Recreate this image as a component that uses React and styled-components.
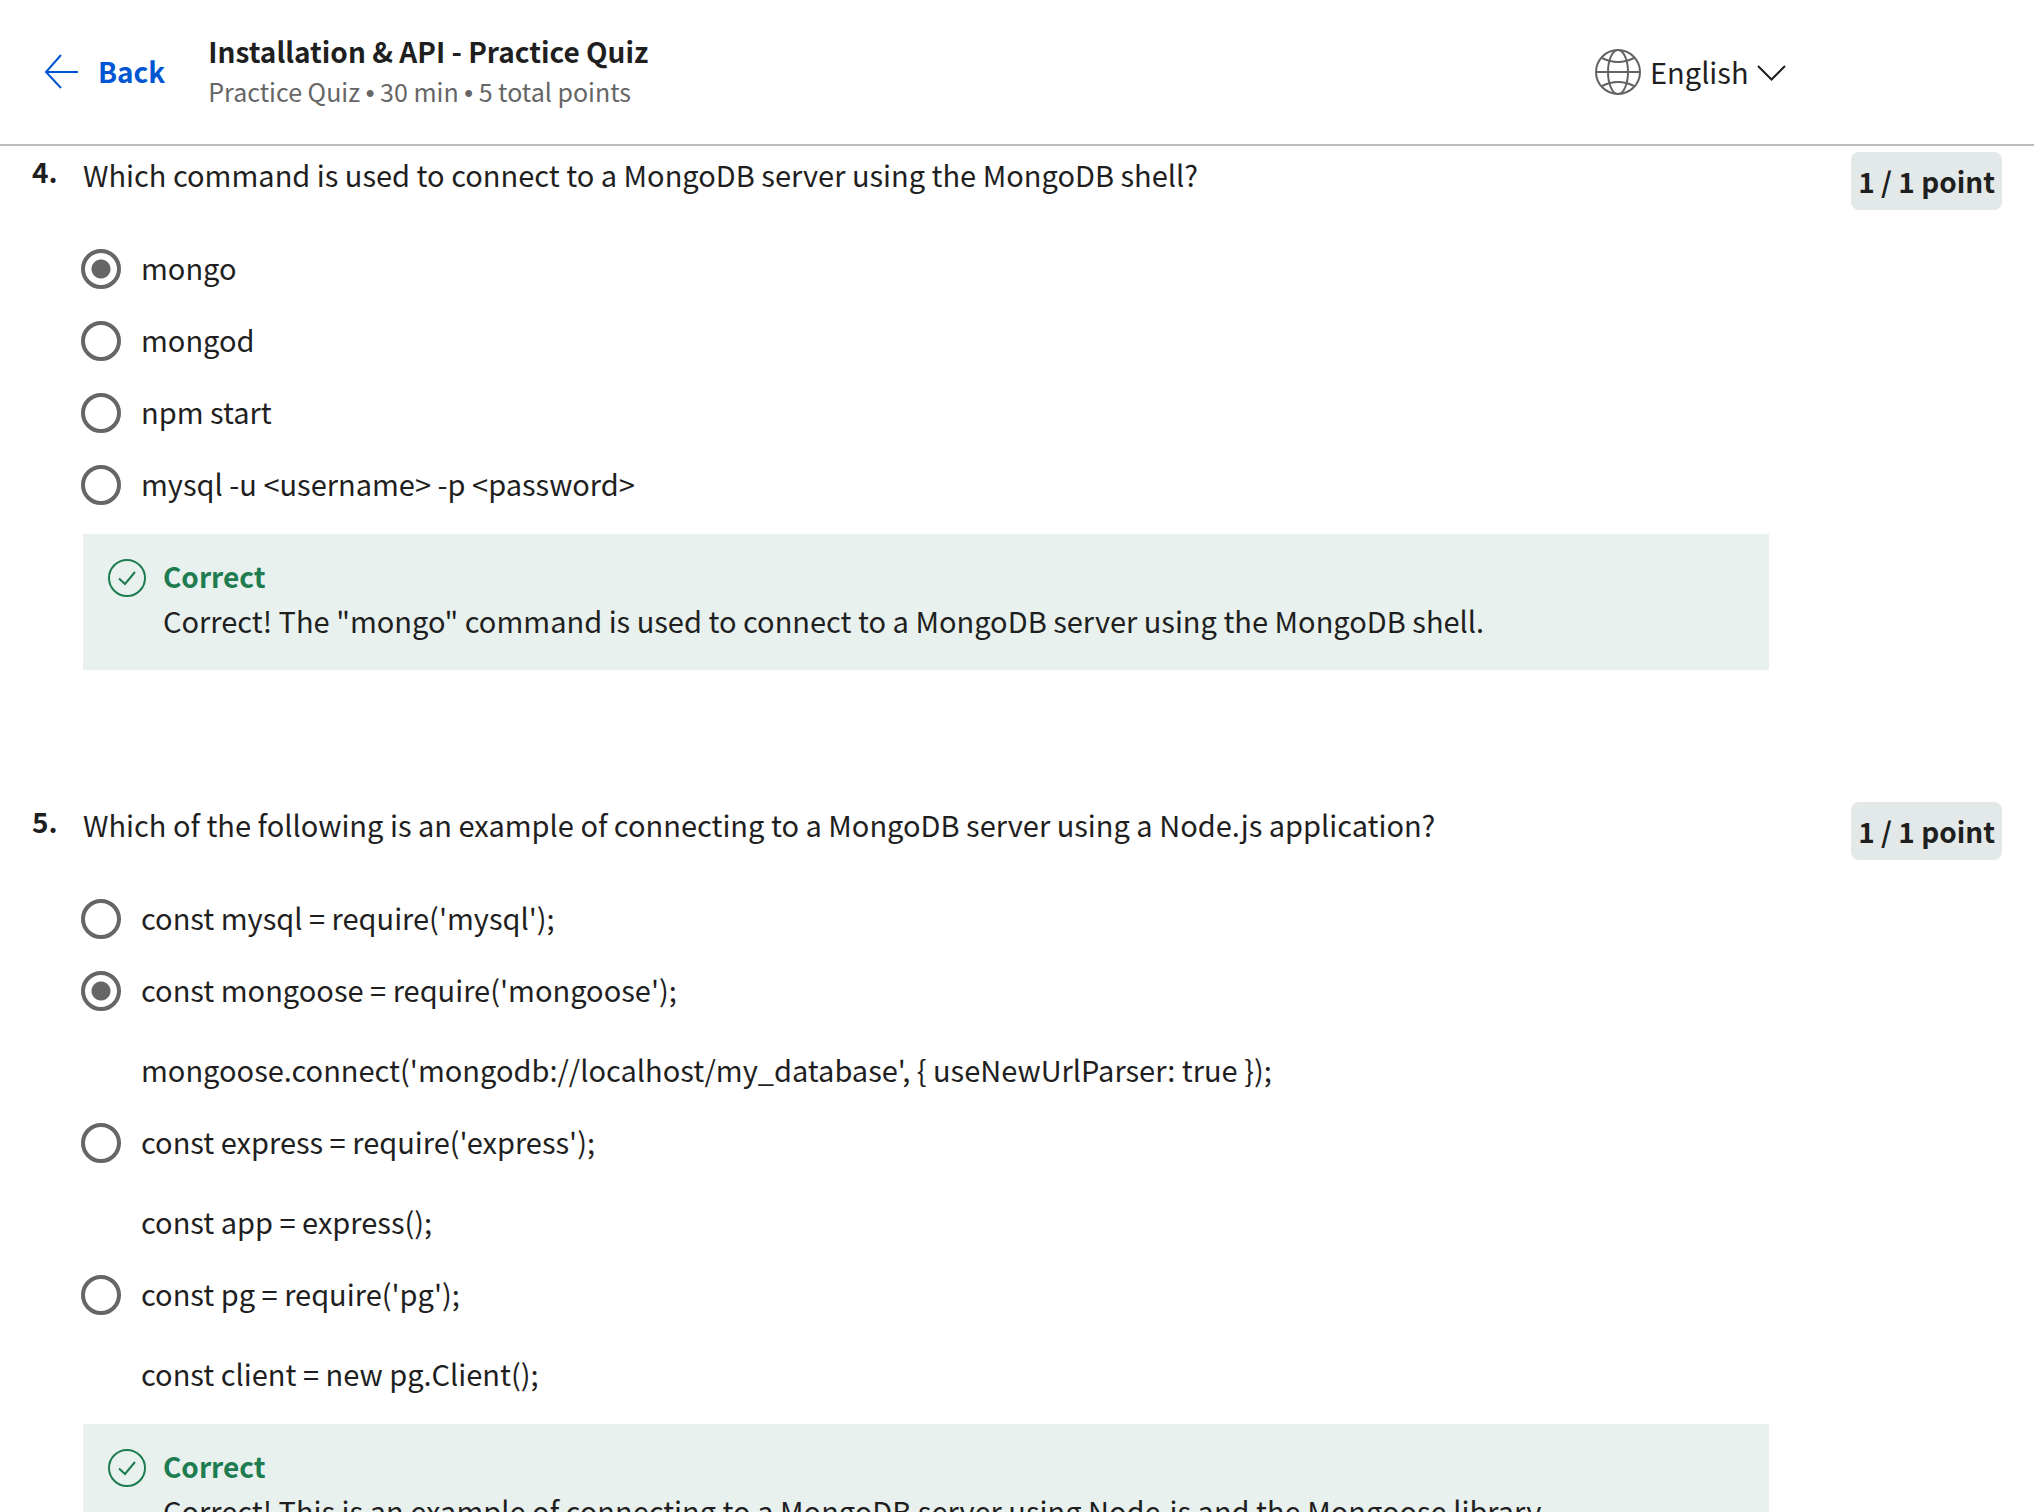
import React from "react";
import styled, { createGlobalStyle } from "styled-components";

const GlobalStyle = createGlobalStyle`
  *, *::before, *::after { box-sizing: border-box; }
  body {
    margin: 0;
    background: #fff;
    color: #1f1f1f;
    font-family: "Noto Sans CJK SC", "Noto Sans", sans-serif;
    font-size: 29px;
    line-height: 44px;
  }
`;

const Page = styled.div`
  display: flex;
  flex-direction: column;
  height: 100vh;
`;

const Header = styled.header`
  flex: none;
  display: flex;
  align-items: center;
  height: 146px;
  padding: 0 248px 2px 44px;
  border-bottom: 2px solid #bbb;
`;

const BackLink = styled.a`
  display: flex;
  align-items: center;
  gap: 19px;
  margin-right: 43px;
  color: #0056d2;
  font-size: 28px;
  font-weight: 700;
  text-decoration: none;
`;

const Heading = styled.div`
  flex: 1;
  padding-top: 2px;
`;

const Title = styled.h1`
  margin: 0;
  font-size: 28px;
  font-weight: 700;
  line-height: 40px;
`;

const Subtitle = styled.p`
  margin: 0;
  color: #666;
  font-size: 25px;
  line-height: 40px;
`;

const Bullet = styled.span`
  font-family: "Liberation Sans", sans-serif;
`;

const Language = styled.label`
  display: flex;
  align-items: center;
`;

const LanguageSelect = styled.select`
  appearance: none;
  margin: 0 8px;
  padding: 0;
  border: 0;
  background: none;
  color: inherit;
  font: inherit;
`;

const Main = styled.main`
  flex: 1;
  min-height: 0;
  overflow-y: auto;
  scrollbar-width: none;
`;

const QuestionSection = styled.section`
  display: grid;
  grid-template-columns: 51px minmax(0, 1fr) auto;
  align-items: start;
  padding: 6px 32px 126px;
`;

const Number = styled.span`
  font-size: 28px;
  font-weight: 700;
  line-height: 38px;
`;

const Body = styled.fieldset`
  min-width: 0;
  margin: 0;
  padding: 0;
  border: 0;
`;

const Prompt = styled.legend`
  padding: 0;
  margin-bottom: 47px;
`;

const Badge = styled.span`
  margin-left: 82px;
  padding: 7px;
  border-radius: 8px;
  background: #e3e8e8;
  font-size: 28px;
  font-weight: 700;
  white-space: nowrap;
`;

const Options = styled.div`
  display: flex;
  flex-direction: column;
  align-items: flex-start;
  gap: 24px;
  margin-left: -2px;
`;

const Option = styled.label`
  display: flex;
  align-items: flex-start;
  gap: 20px;
  line-height: 48px;
`;

const Radio = styled.input`
  appearance: none;
  flex: none;
  width: 40px;
  height: 40px;
  margin: 6px 0 0;
  border: 4px solid #666;
  border-radius: 50%;

  &:checked {
    background: radial-gradient(circle, #666 9px, transparent 10px);
  }
`;

const Lines = styled.span`
  display: grid;
  gap: 32px;
`;

const Feedback = styled.div`
  display: flex;
  gap: 16px;
  margin-top: 27px;
  padding: 20px 24px 28px;
  background: #e8f1ee;
`;

const CheckIcon = styled.svg`
  flex: none;
  margin-top: 4px;
`;

const FeedbackTitle = styled.strong`
  display: block;
  color: #1d7c50;
  font-size: 28px;
  font-weight: 700;
`;

const FeedbackText = styled.p`
  margin: 0;
`;

const questions = [
  {
    number: 4,
    prompt:
      "Which command is used to connect to a MongoDB server using the MongoDB shell?",
    answer: 0,
    options: [
      ["mongo"],
      ["mongod"],
      ["npm start"],
      ["mysql -u <username> -p <password>"],
    ],
    feedback:
      'Correct! The "mongo" command is used to connect to a MongoDB server using the MongoDB shell.',
  },
  {
    number: 5,
    prompt:
      "Which of the following is an example of connecting to a MongoDB server using a Node.js application?",
    answer: 1,
    options: [
      ["const mysql = require('mysql');"],
      [
        "const mongoose = require('mongoose');",
        "mongoose.connect('mongodb://localhost/my_database', { useNewUrlParser: true });",
      ],
      ["const express = require('express');", "const app = express();"],
      ["const pg = require('pg');", "const client = new pg.Client();"],
    ],
    feedback:
      "Correct! This is an example of connecting to a MongoDB server using Node.js and the Mongoose library.",
  },
];

function Question({ number, prompt, answer, options, feedback }) {
  return (
    <QuestionSection>
      <Number>{number}.</Number>
      <Body>
        <Prompt>{prompt}</Prompt>
        <Options>
          {options.map((lines, i) => (
            <Option key={lines[0]}>
              <Radio
                type="radio"
                name={`question-${number}`}
                defaultChecked={i === answer}
              />
              <Lines>
                {lines.map((line) => (
                  <span key={line}>{line}</span>
                ))}
              </Lines>
            </Option>
          ))}
        </Options>
        <Feedback>
          <CheckIcon width="40" height="40" viewBox="0 0 40 40" fill="none" stroke="#1d7c50" strokeWidth="2" aria-hidden="true">
            <circle cx="20" cy="20" r="18" />
            <path d="M12 20.5L18 26L28 14" />
          </CheckIcon>
          <div>
            <FeedbackTitle>Correct</FeedbackTitle>
            <FeedbackText>{feedback}</FeedbackText>
          </div>
        </Feedback>
      </Body>
      <Badge>1 / 1 point</Badge>
    </QuestionSection>
  );
}

export default function App() {
  return (
    <Page>
      <GlobalStyle />
      <Header>
        <BackLink href="#">
          <svg width="35" height="36" viewBox="0 0 35 36" fill="none" stroke="currentColor" strokeWidth="2" aria-hidden="true">
            <path d="M17 2L2 19L17 35M2 19H34" />
          </svg>
          Back
        </BackLink>
        <Heading>
          <Title>Installation &amp; API - Practice Quiz</Title>
          <Subtitle>
            Practice Quiz <Bullet>•</Bullet> 30 min <Bullet>•</Bullet> 5 total points
          </Subtitle>
        </Heading>
        <Language>
          <svg width="48" height="48" viewBox="0 0 48 48" fill="none" stroke="#636363" strokeWidth="2" aria-hidden="true">
            <circle cx="24" cy="25" r="22" />
            <ellipse cx="24" cy="25" rx="10" ry="22" />
            <path d="M2 25H46M8 11Q24 19 40 11M8 39Q24 31 40 39" />
          </svg>
          <LanguageSelect aria-label="Language">
            <option>English</option>
          </LanguageSelect>
          <svg width="29" height="20" viewBox="0 0 29 20" fill="none" stroke="#1f1f1f" strokeWidth="2" aria-hidden="true">
            <path d="M1 5L14.500 18.500L28 5" />
          </svg>
        </Language>
      </Header>
      <Main>
        {questions.map((q) => (
          <Question key={q.number} {...q} />
        ))}
      </Main>
    </Page>
  );
}
